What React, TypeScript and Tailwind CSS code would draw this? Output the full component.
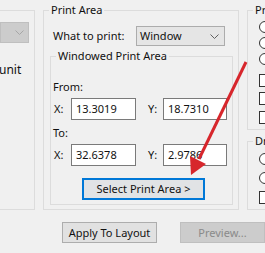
import React from "react";

const Chevron = ({ color = "#606060" }: { color?: string }) => (
  <svg width="9" height="5" viewBox="0 0 9 5" className="shrink-0">
    <path d="M0.5 0.5 L4.5 4.5 L8.5 0.5" fill="none" stroke={color} strokeWidth="1" />
  </svg>
);

const Radio = () => (
  <div className="w-[12px] h-[12px] rounded-full border border-[#333333] bg-white" />
);

const Check = () => <div className="w-[13px] h-[13px] border border-[#333333] bg-white" />;

const TextBox = ({ value, width }: { value: string; width: string }) => (
  <div className={`${width} h-[22px] border border-[#7a7a7a] bg-white flex items-center pl-[4px]`}>
    {value}
  </div>
);

export default function App() {
  return (
    <div className="relative w-[265px] h-[253px] overflow-hidden bg-[#f0f0f0] text-[11px] leading-[14px] text-[#111111] font-['Noto_Sans',sans-serif]">
      <div className="flex mt-[10px] h-[200px]">
        {/* left panel, mostly cut off */}
        <div className="w-[35px] shrink-0 border-t border-r border-b border-[#dcdcdc]">
          <div className="mt-[11px] w-[29px] h-[21px] bg-[#cccccc] border border-[#bfbfbf] flex items-center justify-end pr-[4px]">
            <Chevron color="#a6a6a6" />
          </div>
          <div className="mt-[20px] -ml-[1px] text-[12px]">unit</div>
        </div>

        {/* print area */}
        <div className="relative ml-[8px] w-[196px] shrink-0 border border-[#dcdcdc]">
          <span className="absolute -top-[8px] left-[5px] px-[2px] bg-[#f0f0f0]">Print Area</span>
          <div className="flex items-center mt-[15px] pl-[9px]">
            <span className="w-[83px]">What to print:</span>
            <div className="w-[89px] h-[20px] bg-[#e5e5e5] border border-[#acacac] flex items-center justify-between pl-[3px] pr-[5px]">
              <span>Window</span>
              <Chevron />
            </div>
          </div>

          <div className="relative ml-[6px] mt-[10px] w-[183px] h-[149px] border border-[#dcdcdc]">
            <span className="absolute -top-[8px] left-[5px] px-[2px] bg-[#f0f0f0]">Windowed Print Area</span>
            <div className="mt-[23px] pl-[2px]">From:</div>
            <div className="flex items-center mt-[4px] pl-[3px]">
              <span className="w-[17px]">X:</span>
              <TextBox value="13.3019" width="w-[65px]" />
              <span className="ml-[12px] w-[15px]">Y:</span>
              <TextBox value="18.7310" width="w-[64px]" />
            </div>
            <div className="mt-[6px] pl-[2px]">To:</div>
            <div className="flex items-center mt-[4px] pl-[3px]">
              <span className="w-[17px]">X:</span>
              <TextBox value="32.6378" width="w-[65px]" />
              <span className="ml-[12px] w-[15px]">Y:</span>
              <TextBox value="2.9786" width="w-[64px]" />
            </div>
            <div className="ml-[31px] mt-[12px] w-[123px] h-[22px] bg-[#e1e3e5] border-2 border-[#0078d7] flex items-center justify-center">
              Select Print Area &gt;
            </div>
          </div>
        </div>

        {/* right panel, cut off */}
        <div className="ml-[8px] flex-1 flex flex-col">
          <div className="relative h-[120px] border-t border-l border-b border-[#dcdcdc] pl-[11px] pt-[10px] flex flex-col gap-[4px]">
            <span className="absolute -top-[8px] left-[5px] px-[2px] bg-[#f0f0f0]">Pr</span>
            <Radio />
            <Radio />
            <Radio />
            <div className="mt-[5px]"><Check /></div>
            <div className="mt-[1px]"><Check /></div>
            <div className="mt-[2px]"><Check /></div>
          </div>
          <div className="relative mt-[11px] flex-1 border-t border-l border-b border-[#dcdcdc] pl-[11px] pt-[11px] flex flex-col gap-[7px]">
            <span className="absolute -top-[8px] left-[5px] px-[2px] bg-[#f0f0f0]">Dr</span>
            <Radio />
            <Radio />
            <Check />
          </div>
        </div>
      </div>

      <div className="flex mt-[12px]">
        <div className="ml-[62px] w-[103px] h-[21px] bg-[#e1e1e1] border border-[#adadad] flex items-center justify-center">
          Apply To Layout
        </div>
        <div className="ml-[23px] w-[85px] h-[21px] shrink-0 bg-[#cccccc] border border-[#bfbfbf] text-[#8a8a8a] flex items-center justify-center">
          Preview...
        </div>
      </div>

      {/* annotation arrow */}
      <svg className="absolute inset-0 pointer-events-none" width="265" height="253">
        <line x1="246" y1="62" x2="199" y2="159" stroke="#d7262c" strokeWidth="3" />
        <polygon points="191,175 206,164 190,156" fill="#d7262c" />
      </svg>
    </div>
  );
}
